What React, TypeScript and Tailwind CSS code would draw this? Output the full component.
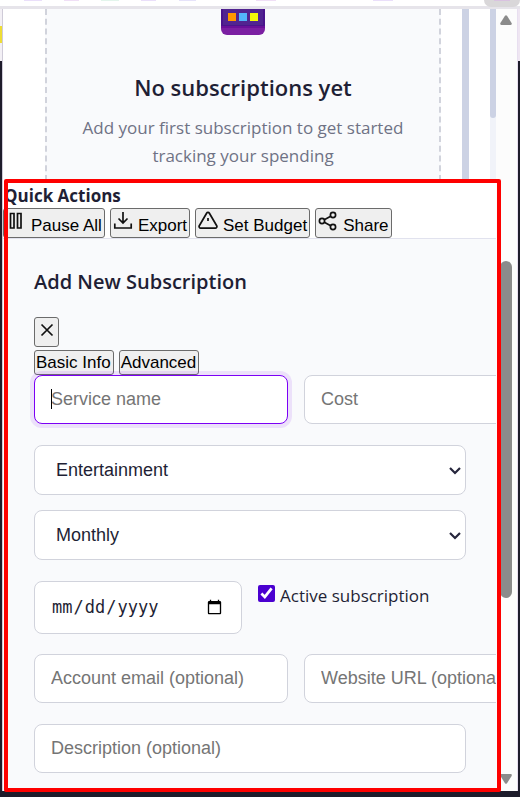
import type { InputHTMLAttributes, ReactNode, SelectHTMLAttributes } from "react";

const field =
  "block border bg-white text-[#1f1f35] outline-none rounded-[8px] placeholder:text-[#757575] placeholder:opacity-100";
const arial = "font-['Liberation_Sans',Arial,sans-serif]";

function PlainButton({ label, children }: { label?: string; children: ReactNode }) {
  return (
    <button
      type="button"
      aria-label={label}
      className={`inline-flex items-baseline gap-[5px] whitespace-nowrap rounded-[3px] border border-[#6b6b6b] bg-[#efefef] py-[2px] pl-px pr-[2px] text-[17px] leading-[19px] text-black ${arial}`}
    >
      {children}
    </button>
  );
}

function Icon({ children }: { children: ReactNode }) {
  return (
    <svg
      aria-hidden="true"
      viewBox="0 0 20 20"
      className="ml-px h-5 w-5 shrink-0"
      fill="none"
      stroke="#111"
      strokeWidth="1.7"
    >
      {children}
    </svg>
  );
}

function TextField({
  label,
  focused = false,
  ...rest
}: { label: string; focused?: boolean } & InputHTMLAttributes<HTMLInputElement>) {
  return (
    <div className="relative">
      <input
        aria-label={label}
        placeholder={label}
        className={`${field} ${arial} h-[49px] w-full px-4 text-[18px] leading-[21px] ${
          focused ? "border-[#7c00f5] ring-4 ring-[#7c00f5]/10" : "border-[#d1d3dc]"
        }`}
        {...rest}
      />
      {focused && <span className="absolute left-[17px] top-[14px] h-5 w-px bg-black" />}
    </div>
  );
}

function SelectField({
  label,
  options,
  ...rest
}: { label: string; options: string[] } & SelectHTMLAttributes<HTMLSelectElement>) {
  return (
    <div className="relative">
      <select
        aria-label={label}
        className={`${field} ${arial} h-[50px] w-full appearance-none border-[#d1d3dc] pl-[21px] pr-8 text-[18px] leading-[21px]`}
        {...rest}
      >
        {options.map((o) => (
          <option key={o}>{o}</option>
        ))}
      </select>
      <svg
        aria-hidden="true"
        viewBox="0 0 12 8"
        className="pointer-events-none absolute right-[5px] top-[22px] h-2 w-3"
        fill="none"
        stroke="#26263c"
        strokeWidth="2.2"
      >
        <path d="m1 1 5 5 5-5" />
      </svg>
    </div>
  );
}

function BrowserStrip() {
  return (
    <div className="flex h-[9px] items-start border-b-[3px] border-[#e6e4ea] bg-white pl-6">
      <span className="h-px w-[18px] bg-[#eadffa]" />
      <span className="ml-[22px] h-px w-[15px] bg-[#f0dff6]" />
      <span className="ml-[22px] h-px w-[18px] bg-[#e3f5ec]" />
      <span className="ml-[22px] h-px w-[15px] bg-[#eadffa]" />
      <span className="ml-[23px] h-px w-[17px] bg-[#e6e3fa]" />
      <span className="ml-[60px] h-px w-[20px] bg-[#f0dff6]" />
      <span className="ml-[97px] h-px w-[20px] bg-[#eadffa]" />
      <span className="ml-auto flex h-[7px] w-[36px] justify-center rounded-b-[8px] bg-[#d9d7d9]">
        <span className="h-px w-4 bg-[#d9c2e0]" />
      </span>
    </div>
  );
}

function Scrollbar() {
  return (
    <div className="flex w-[22px] shrink-0 flex-col items-center border-r border-[#e8dff0] bg-[#fcfcfc] pb-[7px] pr-[2px] pt-[6px]">
      <svg viewBox="0 0 12 10" className="h-[10px] w-3" fill="#8b8b8b" aria-hidden="true">
        <path d="M5 .8a1.300 1.300 0 0 1 2 0l4.600 7.200c.5 1 .1 2-1 2H1.400c-1.100 0-1.500-1-1-2z" />
      </svg>
      <div className="flex-[236]" />
      <div className="h-[337px] w-3 rounded-full bg-[#8b8b8b]" />
      <div className="flex-[176]" />
      <svg viewBox="0 0 12 10" className="h-[10px] w-3" fill="#8b8b8b" aria-hidden="true">
        <path d="M5 9.200a1.300 1.300 0 0 0 2 0L11.600 2c.5-1 .1-2-1-2H1.400C.3 0-.1 1 .4 2z" />
      </svg>
    </div>
  );
}

function EmptyState() {
  return (
    <section className="flex h-[172px] pl-[42px]">
      <div className="flex flex-1 flex-col items-center border-x-2 border-dashed border-[#d1d3dc] bg-[#f9fafc] text-center">
        <svg viewBox="0 0 44 26" className="h-[26px] w-11" aria-hidden="true">
          <path d="M0 0h44v20a6 6 0 0 1-6 6H6a6 6 0 0 1-6-6z" fill="#7b1fa2" />
          <path d="M0 0h44v17H0z" fill="#4a148c" />
          <path d="M2 0h40v16H2z" fill="#512490" />
          <path d="M0 17h44v2H0z" fill="#6a1099" />
          <rect x="7" y="4" width="8" height="8" fill="#ff9800" />
          <rect x="18" y="4" width="8" height="8" fill="#53b5fa" />
          <rect x="29" y="4" width="8" height="8" fill="#f4f80a" />
        </svg>
        <h2 className="mt-[37px] text-[22px] font-semibold leading-[30px] text-[#1f1f35]">
          No subscriptions yet
        </h2>
        <p className="mt-[12px] w-[340px] text-[17px] leading-[28px] text-[#6f7285]">
          Add your first subscription to get started tracking your spending
        </p>
      </div>
      <div className="ml-[21px] w-[7px] bg-[#ccd2e4]" />
      <div className="ml-[21px] w-[6px] bg-[#f1f3f9]">
        <div className="h-[109px] rounded-b-[3px] bg-[#ccd2e4]" />
      </div>
    </section>
  );
}

function QuickActions() {
  return (
    <section>
      <h3 className="mt-[3px] pl-px text-[17px] font-bold leading-[24px] text-[#1f1f35]">
        Quick Actions
      </h3>
      <div className="flex gap-[5px]">
        <PlainButton>
          <Icon>
            <path d="M4.500 2.500h3.500v14.500H4.500zM11.500 2.500H15v14.500h-3.500z" />
          </Icon>
          Pause All
        </PlainButton>
        <PlainButton>
          <Icon>
            <path d="M10 1v11M5.500 7.500 10 12l4.500-4.500M1.800 12.500V17h16.400v-4.500" />
          </Icon>
          Export
        </PlainButton>
        <PlainButton>
          <Icon>
            <path d="M8.600 2.200 1.300 14.800a1.600 1.600 0 0 0 1.400 2.400h14.600a1.600 1.600 0 0 0 1.400-2.400L11.400 2.200a1.600 1.600 0 0 0-2.800 0zM10 7v3" />
          </Icon>
          Set Budget
        </PlainButton>
        <PlainButton>
          <Icon>
            <circle cx="4" cy="10" r="2.600" />
            <circle cx="15" cy="4" r="2.600" />
            <circle cx="15" cy="16" r="2.600" />
            <path d="m6.300 8.700 6.400-3.400M6.300 11.300l6.400 3.400" />
          </Icon>
          Share
        </PlainButton>
      </div>
    </section>
  );
}

function SubscriptionForm() {
  return (
    <section className="border-t border-[#e1e2ee] bg-[#f9fafc] pb-[18px] pl-[31px] pr-[30px]">
      <h3 className="pt-[29px] text-[20px] font-semibold leading-[28px] text-[#1f1f35]">
        Add New Subscription
      </h3>
      <button
        type="button"
        aria-label="Close"
        className="mt-[21px] flex h-[30px] w-[25px] justify-center rounded-[3px] border border-[#6b6b6b] bg-[#efefef] pt-[2px]"
      >
        <svg aria-hidden="true" viewBox="0 0 20 20" className="h-5 w-5" stroke="#111" strokeWidth="1.7">
          <path d="m4.500 4.500 11 11M15.500 4.500l-11 11" />
        </svg>
      </button>
      <div className="mt-[3px] flex gap-[5px]">
        <PlainButton>Basic Info</PlainButton>
        <PlainButton>Advanced</PlainButton>
      </div>
      <form className="flex flex-col">
        <div className="grid grid-cols-[254px_254px] gap-4">
          <TextField label="Service name" focused />
          <TextField label="Cost" />
        </div>
        <div className="mt-[21px] flex flex-col gap-[15px]">
          <SelectField label="Category" options={["Entertainment", "Productivity", "Utilities"]} />
          <SelectField label="Billing cycle" options={["Monthly", "Weekly", "Yearly"]} />
        </div>
        <div className="mt-[21px] flex gap-4">
          <input
            type="date"
            aria-label="Next billing date"
            className={`${field} h-[53px] w-[208px] border-[#d1d3dc] px-4 font-['DejaVu_Sans_Mono',monospace] text-[17px]`}
          />
          <label className="flex h-[30px] gap-[5px] text-[17px] leading-[30px] text-[#1f1f35]">
            <input type="checkbox" defaultChecked className="mt-1 h-[17px] w-[17px] accent-[#4a00d0]" />
            Active subscription
          </label>
        </div>
        <div className="mt-5 grid grid-cols-[254px_254px] gap-4">
          <TextField label="Account email (optional)" />
          <TextField label="Website URL (optional)" />
        </div>
        <div className="mt-[21px]">
          <TextField label="Description (optional)" />
        </div>
      </form>
    </section>
  );
}

export default function App() {
  return (
    <div className="relative flex min-h-screen flex-col overflow-hidden bg-[#1e1c2b] font-['Open_Sans','Noto_Sans',sans-serif]">
      <BrowserStrip />
      <div className="mb-[6px] flex flex-1">
        <div className="w-[3px] shrink-0 border-r border-[#cfcbd8]">
          <div className="h-[17px] bg-[#f3f0f5]" />
          <div className="h-[17px] bg-[#eedd35]" />
          <div className="h-[18px] bg-[#f3f0f5]" />
        </div>
        <main className="min-w-0 flex-1 overflow-hidden bg-white">
          <EmptyState />
          <QuickActions />
          <SubscriptionForm />
        </main>
        <Scrollbar />
        <div className="w-[2px] shrink-0">
          <div className="h-[52px] bg-[#efe6f2]" />
        </div>
      </div>
      <div className="pointer-events-none absolute bottom-[5px] left-1 right-[19px] top-[179px] rounded-[2px] border-4 border-[#fe0000]" />
    </div>
  );
}
